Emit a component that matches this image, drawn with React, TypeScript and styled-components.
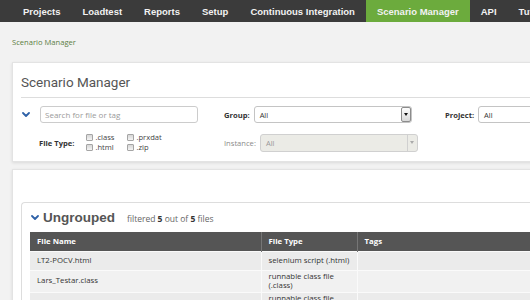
import React from "react";
import styled, { createGlobalStyle } from "styled-components";

const Global = createGlobalStyle`
  html, body { margin: 0; padding: 0; background: #f2f2f2; overflow: hidden; }
  body { font-family: "Open Sans", "Liberation Sans", sans-serif; color: #333; }
  * { box-sizing: border-box; }
`;

const Page = styled.div`
  width: 760px;
`;

const Nav = styled.nav`
  display: flex;
  height: 22px;
  background: #3b3b3b;
  padding-left: 12px;
`;

const NavItem = styled.a<{ $active?: boolean }>`
  display: flex;
  align-items: center;
  padding: 0 11px;
  font-family: "Liberation Sans", Arial, sans-serif;
  font-weight: bold;
  font-size: 9.5px;
  color: #f2f2f2;
  background: ${(p) => (p.$active ? "#6cab3d" : "transparent")};
  white-space: nowrap;
  text-decoration: none;
`;

const Breadcrumb = styled.div`
  height: 40px;
  display: flex;
  align-items: center;
  padding-left: 12px;
  font-size: 7.6px;
  color: #5b7d43;
`;

const Card = styled.section`
  margin: 0 12px;
  background: #fff;
  border: 1px solid #e3e3e3;
  box-shadow: 0 1px 3px rgba(0, 0, 0, 0.1);
`;

const Heading = styled.h1`
  margin: 0 8px;
  padding: 9px 0 5px;
  line-height: 20px;
  font-family: Roboto, "Open Sans", sans-serif;
  font-weight: 400;
  font-size: 13.5px;
  color: #555;
  border-bottom: 1px solid #ddd;
`;

const Filters = styled.div`
  display: grid;
  grid-template-columns: 19px 184px 221px auto;
  row-gap: 10px;
  align-items: center;
  padding: 8px 0 9px 8px;
`;

const Chevron = styled.svg`
  display: block;
  margin-left: 1px;
`;

const SearchInput = styled.input`
  width: 158px;
  height: 17px;
  border: 1px solid #ccc;
  border-radius: 3px;
  padding: 0 4px;
  font-family: "Open Sans", sans-serif;
  font-size: 8px;
  color: #333;
  outline: none;
  &::placeholder { color: #9a9a9a; }
`;

const Field = styled.div`
  display: flex;
  align-items: center;
  gap: 4px;
`;

const Label = styled.span<{ $muted?: boolean }>`
  font-size: 7.6px;
  font-weight: ${(p) => (p.$muted ? 400 : 700)};
  color: ${(p) => (p.$muted ? "#8a8a8a" : "#333")};
  white-space: nowrap;
`;

const Select = styled.div<{ $disabled?: boolean; $w?: number }>`
  width: ${(p) => p.$w ?? 158}px;
  height: ${(p) => (p.$disabled ? 18 : 17)}px;
  display: flex;
  align-items: center;
  justify-content: space-between;
  padding-left: 5px;
  border: 1px solid ${(p) => (p.$disabled ? "#d0d0d0" : "#c4c4c4")};
  border-radius: 3px;
  background: ${(p) => (p.$disabled ? "#ebebe6" : "#fff")};
  font-size: 7.5px;
  color: ${(p) => (p.$disabled ? "#999" : "#333")};
`;

const ArrowBox = styled.span`
  width: 10px;
  height: 15px;
  display: flex;
  align-items: center;
  justify-content: center;
  border: 1px solid #8c8c8c;
  border-radius: 2px;
  background: linear-gradient(#fdfdfd, #d9d9d9);
`;

const ArrowPlain = styled.span`
  width: 10px;
  align-self: stretch;
  display: flex;
  align-items: center;
  justify-content: center;
  border-left: 1px solid #d0d0d0;
`;

const Triangle = styled.span<{ $color: string }>`
  width: 0;
  height: 0;
  border-left: 2.5px solid transparent;
  border-right: 2.5px solid transparent;
  border-top: 3px solid ${(p) => p.$color};
`;

const FileType = styled.div`
  display: flex;
  align-items: center;
  gap: 12px;
  margin-left: -1px;
`;

const CheckGrid = styled.div`
  display: grid;
  grid-template-columns: 41px auto;
  line-height: 9.5px;
`;

const Check = styled.label`
  display: flex;
  align-items: center;
  gap: 2px;
  font-size: 7.6px;
  color: #444;
`;

const Box = styled.span`
  width: 7px;
  height: 7px;
  border: 1px solid #a5a5a5;
  border-radius: 1px;
  background: linear-gradient(#d6d6d6, #f4f4f4);
`;

const ListCard = styled(Card)`
  margin-top: 7px;
  height: 200px;
  padding: 32px 0 0 8px;
`;

const Group = styled.div`
  border: 1px solid #ddd;
  border-right: none;
  border-radius: 4px 0 0 0;
  padding: 0 0 0 8px;
  height: 160px;
`;

const GroupHeader = styled.div`
  display: flex;
  align-items: center;
  height: 18px;
  margin-top: 5px;
`;

const GroupTitle = styled.span`
  margin-left: 4px;
  font-family: "Liberation Sans", Arial, sans-serif;
  font-weight: bold;
  font-size: 13.5px;
  color: #555;
`;

const Count = styled.span`
  margin-left: 12px;
  padding-top: 2px;
  font-size: 8.5px;
  color: #666;
  b { color: #333; font-weight: 700; }
`;

const Table = styled.table`
  margin-top: 6px;
  width: 700px;
  border-collapse: collapse;
  table-layout: fixed;
`;

const Th = styled.th`
  height: 19px;
  padding: 0 7px;
  text-align: left;
  background: #555;
  color: #fff;
  font-size: 7.8px;
  font-weight: 700;
  border-left: 1px solid #767676;
  &:first-child { border-left: none; }
`;

const Tr = styled.tr<{ $alt?: boolean }>`
  height: 19px;
  background: ${(p) => (p.$alt ? "#f1f1f1" : "#ebebeb")};
`;

const Td = styled.td`
  padding: 1px 4px 1px 7px;
  line-height: 9.5px;
  font-size: 7.8px;
  color: #333;
  vertical-align: middle;
  border-top: 1px solid #fafafa;
  border-left: 1px solid #fafafa;
  &:first-child { border-left: none; }
`;

const ChevronIcon = () => (
  <Chevron width="8" height="5" viewBox="0 0 8 5">
    <polyline points="1,1 4,4 7,1" fill="none" stroke="#2f62a8" strokeWidth="1.8" strokeLinecap="round" strokeLinejoin="round" />
  </Chevron>
);

const navItems = ["Projects", "Loadtest", "Reports", "Setup", "Continuous Integration", "Scenario Manager", "API", "Tutorials"];

const rows = [
  { name: "LT2-POCV.html", type: "selenium script (.html)" },
  { name: "Lars_Testar.class", type: "runnable class file (.class)" },
  { name: "sample_scenario.class", type: "runnable class file (.class)" },
];

export default function App() {
  return (
    <Page>
      <Global />
      <Nav>
        {navItems.map((n) => (
          <NavItem key={n} $active={n === "Scenario Manager"}>{n}</NavItem>
        ))}
      </Nav>
      <Breadcrumb>Scenario Manager</Breadcrumb>
      <Card>
        <Heading>Scenario Manager</Heading>
        <Filters>
          <ChevronIcon />
          <SearchInput placeholder="Search for file or tag" />
          <Field>
            <Label>Group:</Label>
            <Select>
              All
              <ArrowBox><Triangle $color="#111" /></ArrowBox>
            </Select>
          </Field>
          <Field>
            <Label>Project:</Label>
            <Select $w={200}>All</Select>
          </Field>
          <span />
          <FileType>
            <Label>File Type:</Label>
            <CheckGrid>
              <Check><Box />.class</Check>
              <Check><Box />.prxdat</Check>
              <Check><Box />.html</Check>
              <Check><Box />.zip</Check>
            </CheckGrid>
          </FileType>
          <Field>
            <Label $muted>Instance:</Label>
            <Select $disabled>
              All
              <ArrowPlain><Triangle $color="#aaa" /></ArrowPlain>
            </Select>
          </Field>
          <span />
        </Filters>
      </Card>
      <ListCard>
        <Group>
          <GroupHeader>
            <ChevronIcon />
            <GroupTitle>Ungrouped</GroupTitle>
            <Count>filtered <b>5</b> out of <b>5</b> files</Count>
          </GroupHeader>
          <Table>
            <colgroup>
              <col style={{ width: 231 }} />
              <col style={{ width: 96 }} />
              <col />
            </colgroup>
            <thead>
              <tr>
                <Th>File Name</Th>
                <Th>File Type</Th>
                <Th>Tags</Th>
              </tr>
            </thead>
            <tbody>
              {rows.map((r, i) => (
                <Tr key={r.name} $alt={i % 2 === 1}>
                  <Td>{r.name}</Td>
                  <Td>{r.type}</Td>
                  <Td />
                </Tr>
              ))}
            </tbody>
          </Table>
        </Group>
      </ListCard>
    </Page>
  );
}
